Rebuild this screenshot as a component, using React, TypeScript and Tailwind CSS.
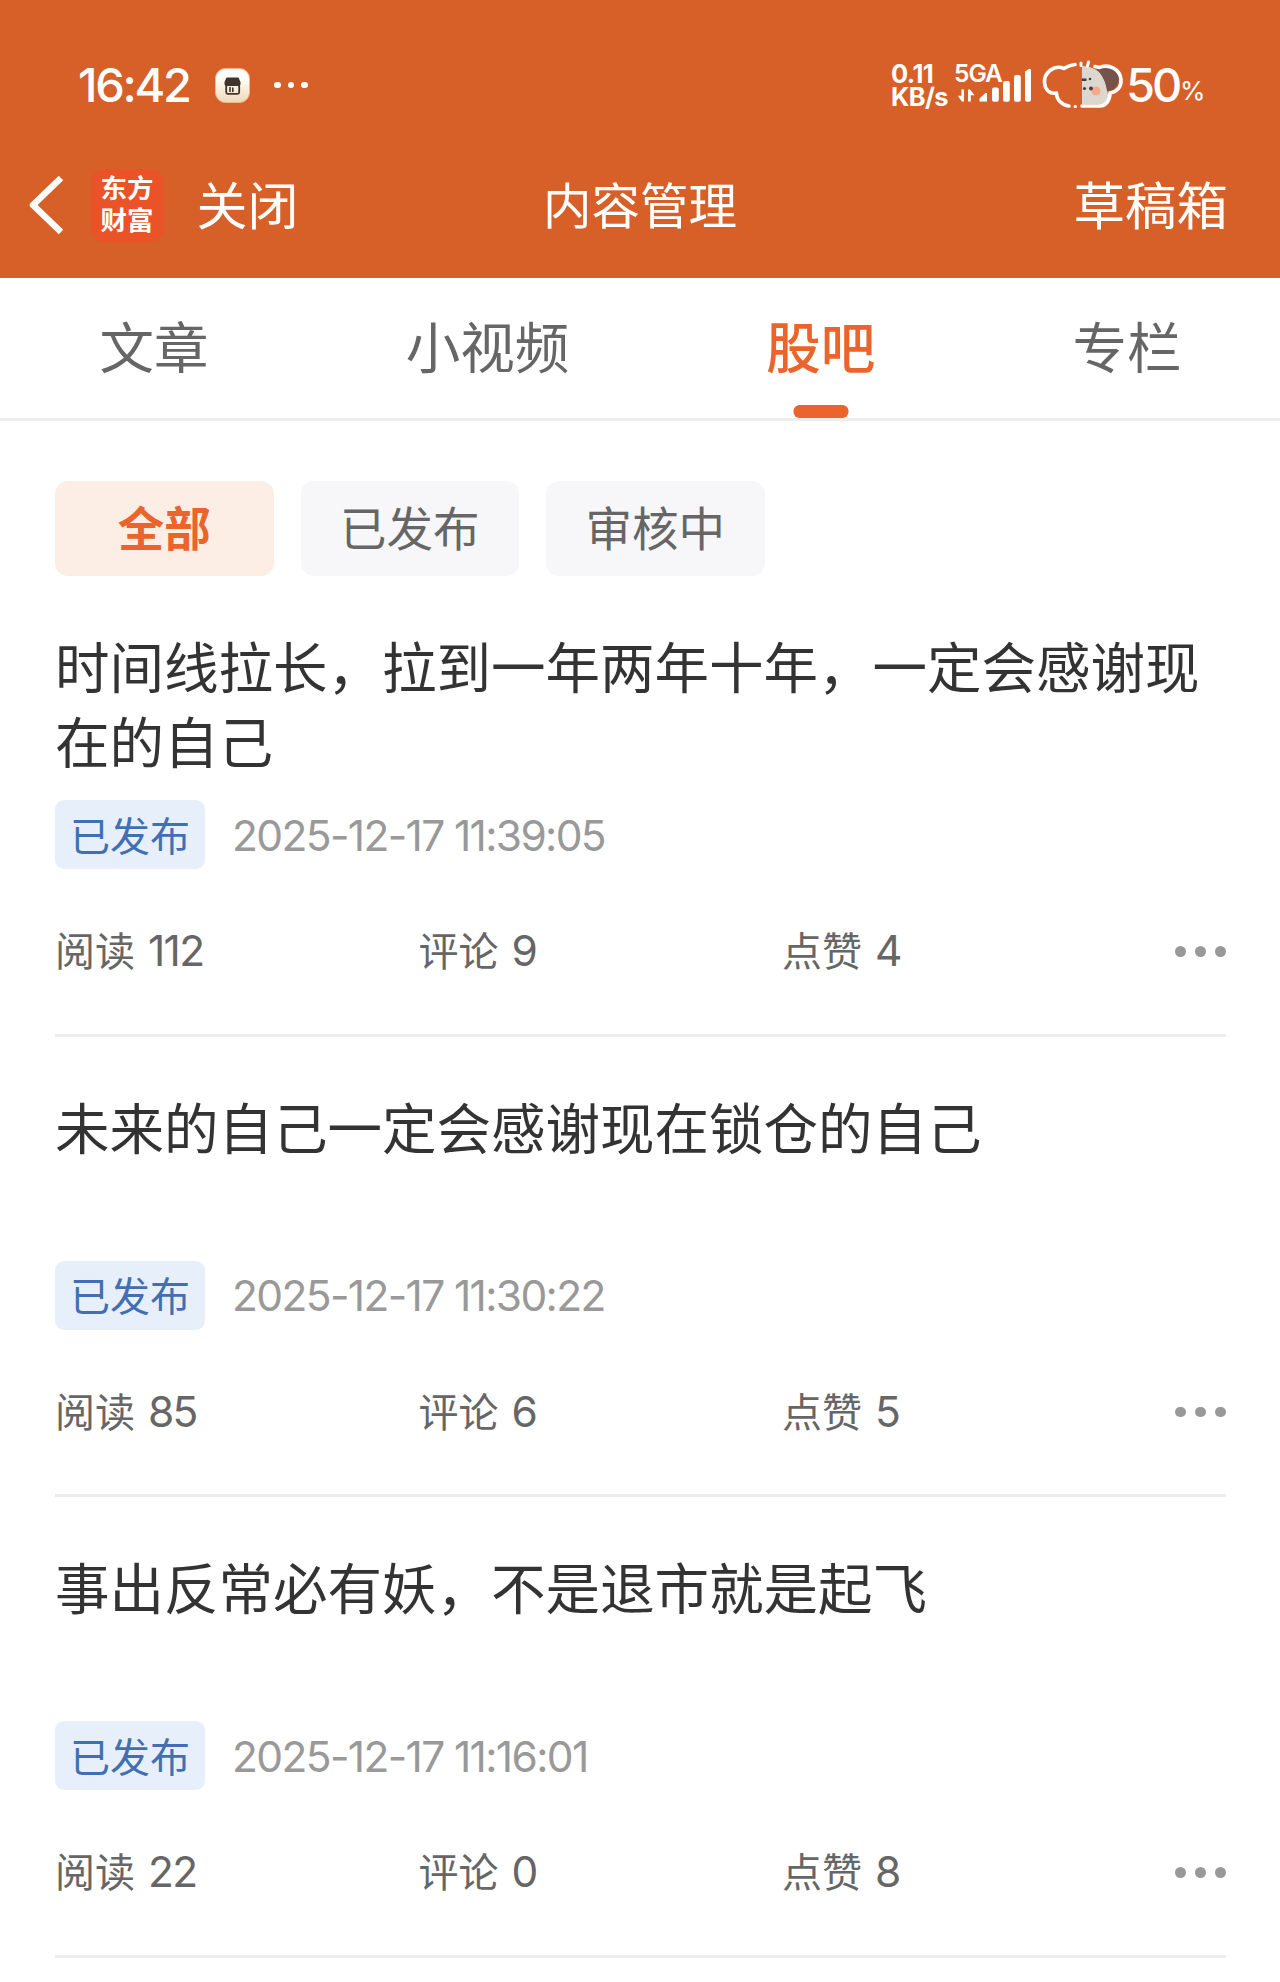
import React from "react";

const CJK = "font-['Noto_Sans_CJK_SC',sans-serif]";
const NUM = "font-['Inter',sans-serif]";

type Post = {
  title: string;
  time: string;
  reads: number;
  comments: number;
  likes: number;
};

const posts: Post[] = [
  { title: "时间线拉长，拉到一年两年十年，一定会感谢现在的自己", time: "2025-12-17 11:39:05", reads: 112, comments: 9, likes: 4 },
  { title: "未来的自己一定会感谢现在锁仓的自己", time: "2025-12-17 11:30:22", reads: 85, comments: 6, likes: 5 },
  { title: "事出反常必有妖，不是退市就是起飞", time: "2025-12-17 11:16:01", reads: 22, comments: 0, likes: 8 },
];

const tabs = ["文章", "小视频", "股吧", "专栏"];
const filters = ["全部", "已发布", "审核中"];

function StoreIcon() {
  return (
    <svg className="ml-[26px] h-[35px] w-[35px]" viewBox="0 0 35 35">
      <defs>
        <linearGradient id="store" x1="0" y1="0" x2="0" y2="1">
          <stop offset="0.3" stopColor="#fffdfa" />
          <stop offset="1" stopColor="#f0d9b4" />
        </linearGradient>
      </defs>
      <rect x="0.5" y="0.5" width="34" height="34" rx="10" fill="url(#store)" stroke="#f6b48f" strokeWidth="1" />
      <path d="M11.5 9.5h12l2 4.5v2.5a2 2 0 0 1-2 1.500h-12a2 2 0 0 1-2-1.500V14z" fill="#40342c" />
      <rect x="11.2" y="17" width="13" height="8.8" rx="1.5" fill="none" stroke="#40342c" strokeWidth="1.8" />
      <path d="M15 19v5M17.8 19.5v4.5" stroke="#40342c" strokeWidth="1.6" />
    </svg>
  );
}

function SignalIcon() {
  return (
    <svg className="h-[42px] w-[78px] shrink-0" viewBox="0 0 78 42">
      <g fill="#fff">
        <path d="M7.4 25.5h2.6v12h-2.2L3.8 31.8h3.6z" />
        <path d="M14 25.5h2l4.6 5.7h-3.8v6.3H14z" />
        <path d="M25.5 37.5v-3l6-5.5h1.5v8.5z" />
        <rect x="38" y="23.5" width="6.8" height="14.2" rx="2" />
        <rect x="49" y="17" width="6.8" height="20.7" rx="2" />
        <rect x="60" y="11" width="6.8" height="26.7" rx="2" />
        <path d="M71 7.5l4-2.6q2-.6 2 1.4v29.4q0 2-2 2h-2q-2 0-2-2z" />
      </g>
    </svg>
  );
}

function MascotBattery() {
  return (
    <svg className="h-[50px] w-[82px] shrink-0" viewBox="0 0 82 50">
      <path d="M40 6c9 0 17 4 21 11 3 6 4 12 5 18 1 5-3 9-8 9H40z" fill="#ddd8cf" />
      <path d="M53 8c8-6 20-3 23 6 3 8-2 17-11 17-1-9-5-17-12-23z" fill="#75524a" />
      <circle cx="54" cy="31" r="4.6" fill="#f5aa8b" />
      <g fill="#4b3b39">
        <circle cx="42.5" cy="28.5" r="1.6" />
        <circle cx="49" cy="28.5" r="2" />
        <path d="M40 18.500h4.500v2.500H40z" />
        <circle cx="48" cy="19" r="1.3" />
      </g>
      <g fill="none" stroke="#fff" strokeWidth="3.6" strokeLinecap="round" strokeLinejoin="round">
        <path d="M33 4.500C29 5 25 6.500 22 8.500C12 4 2 13 2.500 22.500C3 30 8 34.500 14.500 33C14.500 40 20 45 27 46" />
        <path d="M40 46h18c6 0 10-6 10-13C75 32 79.500 27 79 19.500C78 9 67 3.500 57 7.500L53 6.500" />
        <path d="M39 3v2.500M46.500 2l-1 4M33 46.500h0.500" strokeWidth="3" />
      </g>
    </svg>
  );
}

function StatusBar() {
  return (
    <div className={`flex h-[94px] items-center text-white ${NUM}`}>
      <span className="-mt-[2px] ml-[78px] w-[111px] whitespace-nowrap text-[47px] leading-none font-medium tracking-[-2.300px]">16:42</span>
      <StoreIcon />
      <div className="ml-[24px] flex gap-[7px]">
        <i className="size-[6.500px] rounded-full bg-white" />
        <i className="size-[6.500px] rounded-full bg-white" />
        <i className="size-[6.500px] rounded-full bg-white" />
      </div>
      <div className="ml-auto w-[63px] text-[25.500px] leading-[23px] font-bold tracking-[-0.600px]">
        <div>0.11</div>
        <div>KB/s</div>
      </div>
      <div className="relative w-[78px]">
        <SignalIcon />
        <span className="absolute -top-[3px] left-0 text-[24.500px] leading-[25px] font-semibold tracking-[-1px]">5GA</span>
      </div>
      <div className="ml-[10px]">
        <MascotBattery />
      </div>
      <span className="-mt-[1px] ml-[2px] w-[54px] text-[47px] leading-none font-medium tracking-[-3px]">50</span>
      <span className="mr-[76px] w-[24px] pt-[11px] text-[26px] leading-none">%</span>
    </div>
  );
}

function NavBar() {
  return (
    <div className={`grid h-[146px] grid-cols-[1fr_auto_1fr] items-center text-white ${CJK}`}>
      <div className="flex items-center">
        <svg className="ml-[28px] h-[62px] w-[38px]" viewBox="0 0 38 62">
          <path d="M33 4L5 31l28 27" fill="none" stroke="#fff" strokeWidth="6.500" strokeLinejoin="round" />
        </svg>
        <div className="ml-[24.500px] flex h-[73px] w-[73px] flex-col items-center justify-center rounded-[14px] bg-[#ea5328] text-[26.500px] leading-[32px] font-bold">
          <span className="-mt-[4px]">东方</span>
          <span>财富</span>
        </div>
        <span className="-mt-[5px] ml-[33px] text-[51px] leading-[60px]">关闭</span>
      </div>
      <h1 className="-mt-[5px] text-[48.500px] leading-[60px]">内容管理</h1>
      <span className="-mt-[5px] mr-[52px] justify-self-end text-[51.500px] leading-[60px]">草稿箱</span>
    </div>
  );
}

function Stat({ label, value }: { label: string; value: number }) {
  return (
    <div className="flex w-[363.500px] items-baseline">
      <span className="text-[40px] leading-[50px]">{label}</span>
      <span className={`ml-[13px] text-[42.500px] leading-[50px] tracking-[-1.700px] ${NUM}`}>{value}</span>
    </div>
  );
}

function PostCard({ post }: { post: Post }) {
  return (
    <article className="flex h-[460.500px] flex-col border-b-[3px] border-[#ededed] pt-[51px]">
      <h2 className="h-[173px] text-[54.500px] leading-[75px] text-[#333]">{post.title}</h2>
      <div className="flex h-[69px] items-center">
        <span className="flex h-[69px] w-[150px] items-center justify-center rounded-[9px] bg-[#e7f0fa] pb-[2px] text-[40px] leading-none text-[#426fb3]">已发布</span>
        <time className={`mt-[3px] ml-[27px] whitespace-nowrap text-[42.500px] leading-none tracking-[-1.650px] text-[#999] ${NUM}`}>{post.time}</time>
      </div>
      <div className="mt-[55px] flex items-center text-[#666]">
        <Stat label="阅读" value={post.reads} />
        <Stat label="评论" value={post.comments} />
        <Stat label="点赞" value={post.likes} />
        <div className="mt-[3px] ml-auto flex gap-[9.500px]">
          <i className="size-[10.700px] rounded-full bg-[#999]" />
          <i className="size-[10.700px] rounded-full bg-[#999]" />
          <i className="size-[10.700px] rounded-full bg-[#999]" />
        </div>
      </div>
    </article>
  );
}

export default function App() {
  return (
    <div className={`h-[1982px] w-[1280px] overflow-hidden bg-white ${CJK}`}>
      <header className="h-[278px] bg-[#d75f28] pt-[38px]">
        <StatusBar />
        <NavBar />
      </header>
      <nav className="flex h-[143px] justify-around border-b-[3px] border-[#ededed] pl-[1px] text-[54.500px] leading-[134px] text-[#666]">
        {tabs.map((t) =>
          t === "股吧" ? (
            <div key={t} className="relative font-medium text-[#ea642c]">
              {t}
              <span className="absolute bottom-0 left-1/2 h-[13px] w-[55px] -translate-x-1/2 rounded-[6px] bg-[#ea642c]" />
            </div>
          ) : (
            <div key={t}>{t}</div>
          ),
        )}
      </nav>
      <main className="pt-[60px] pr-[54px] pl-[55px]">
        <div className="flex gap-[27px] text-[46.500px] leading-[90px]">
          {filters.map((f, i) => (
            <button
              key={f}
              className={
                i === 0
                  ? "h-[95px] w-[218.500px] rounded-[13px] bg-[#fceee4] pb-[5px] font-bold text-[#ea642c]"
                  : "h-[95px] w-[218.500px] rounded-[13px] bg-[#f7f7fa] pb-[5px] text-[#666]"
              }
            >
              {f}
            </button>
          ))}
        </div>
        {posts.map((p) => (
          <PostCard key={p.time} post={p} />
        ))}
      </main>
    </div>
  );
}
